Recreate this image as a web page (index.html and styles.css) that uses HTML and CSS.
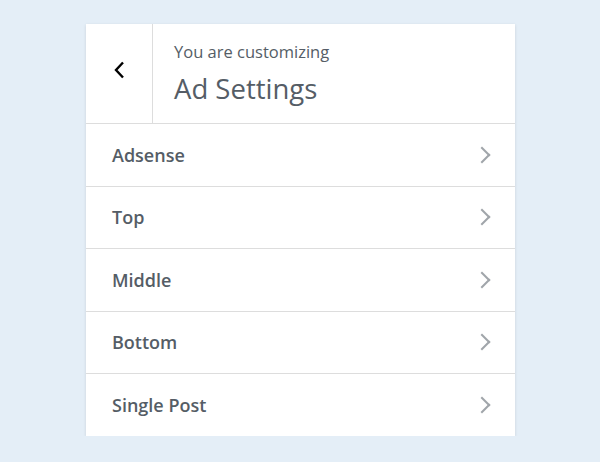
FILE: index.html
```html
<!DOCTYPE html>
<html lang="en">
<head>
    <meta charset="UTF-8">
    <title>Ad Settings</title>
    <link rel="stylesheet" href="styles.css">
</head>
<body>
    <div class="panel">
        <div class="panel-head">
            <button class="back-button" aria-label="Back">
                <svg width="14" height="20" viewBox="0 0 14 20"><path d="M11 2.5 L4 10 L11 17.5" fill="none" stroke="#000" stroke-width="2.4"/></svg>
            </button>
            <div class="head-title">
                <span class="head-sub">You are customizing</span>
                <span class="head-name">Ad Settings</span>
            </div>
        </div>

        <ul class="section-list">
            <li class="section-item">Adsense <span class="arrow"></span></li>
            <li class="section-item">Top <span class="arrow"></span></li>
            <li class="section-item">Middle <span class="arrow"></span></li>
            <li class="section-item">Bottom <span class="arrow"></span></li>
            <li class="section-item">Single Post <span class="arrow"></span></li>
        </ul>
    </div>
</body>
</html>
```

FILE: styles.css
```css
body {
    margin: 0;
    background: #e4eef7;
    font-family: 'Open Sans', 'Noto Sans', sans-serif;
    color: #555d66;
}

/* White customizer panel */
.panel {
    width: 429px;
    margin: 24px 0 0 86px;
    background: #fff;
    box-shadow: 0 1px 3px rgba(0, 0, 0, 0.12);
}

.panel-head {
    display: flex;
    height: 99px;
    border-bottom: 1px solid #ddd;
}

.back-button {
    width: 67px;
    border: none;
    border-right: 1px solid #ddd;
    background: #fff;
    padding: 0 0 8px 0;
    display: flex;
    align-items: center;
    justify-content: center;
    cursor: pointer;
}

.head-title {
    display: flex;
    flex-direction: column;
    padding: 17px 0 0 21px;
}

.head-sub {
    font-size: 16.5px;
    line-height: 22px;
}

.head-name {
    font-size: 27.5px;
    line-height: 36px;
    margin-top: 8px;
}

.section-list {
    list-style: none;
    margin: 0;
    padding: 0;
}

.section-item {
    display: flex;
    align-items: center;
    justify-content: space-between;
    height: 61.5px;
    padding: 0 27px 0 26px;
    font-size: 18px;
    font-weight: 600;
    border-bottom: 1px solid #ddd;
    cursor: pointer;
}

.section-item:last-child {
    border-bottom: none;
}

/* Right-pointing chevron */
.arrow {
    width: 10px;
    height: 10px;
    border-top: 2px solid #a0a5aa;
    border-right: 2px solid #a0a5aa;
    transform: rotate(45deg);
}
```
